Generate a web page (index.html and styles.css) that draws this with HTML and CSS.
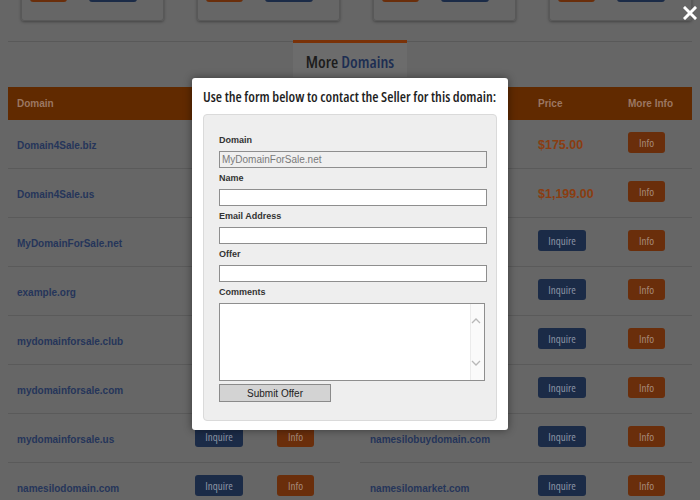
FILE: index.html
```html
<!DOCTYPE html>
<html lang="en">
<head>
<meta charset="utf-8">
<title>More Domains</title>
<link rel="stylesheet" href="styles.css">
</head>
<body>
<div class="page">
  <div class="cards">
    <div class="card"><span class="cbtn c-info"></span><span class="cbtn c-inq"></span></div>
    <div class="card"><span class="cbtn c-info"></span><span class="cbtn c-inq"></span></div>
    <div class="card"><span class="cbtn c-info"></span><span class="cbtn c-inq"></span></div>
    <div class="card"><span class="cbtn c-info"></span><span class="cbtn c-inq"></span></div>
  </div>

  <div class="tabs">
    <div class="tab"><span class="more">More</span> <span class="dom">Domains</span></div>
  </div>

  <div class="tables">
    <div class="tbl left">
      <div class="row head"><span>Domain</span><span></span><span></span></div>
      <div class="row"><a class="dname">Domain4Sale.biz</a><span></span><span></span></div>
      <div class="row"><a class="dname">Domain4Sale.us</a><span></span><span></span></div>
      <div class="row"><a class="dname">MyDomainForSale.net</a><span></span><span></span></div>
      <div class="row"><a class="dname">example.org</a><span></span><span></span></div>
      <div class="row"><a class="dname">mydomainforsale.club</a><span></span><span></span></div>
      <div class="row"><a class="dname">mydomainforsale.com</a><span></span><span></span></div>
      <div class="row"><a class="dname">mydomainforsale.us</a><span><button class="btn inq">Inquire</button></span><span><button class="btn info">Info</button></span></div>
      <div class="row"><a class="dname">namesilodomain.com</a><span><button class="btn inq">Inquire</button></span><span><button class="btn info">Info</button></span></div>
    </div>
    <div class="tbl right">
      <div class="row head"><span></span><span>Price</span><span>More Info</span></div>
      <div class="row"><span></span><span class="price">$175.00</span><span><button class="btn info">Info</button></span></div>
      <div class="row"><span></span><span class="price">$1,199.00</span><span><button class="btn info">Info</button></span></div>
      <div class="row"><span></span><span><button class="btn inq">Inquire</button></span><span><button class="btn info">Info</button></span></div>
      <div class="row"><span></span><span><button class="btn inq">Inquire</button></span><span><button class="btn info">Info</button></span></div>
      <div class="row"><span></span><span><button class="btn inq">Inquire</button></span><span><button class="btn info">Info</button></span></div>
      <div class="row"><span></span><span><button class="btn inq">Inquire</button></span><span><button class="btn info">Info</button></span></div>
      <div class="row"><a class="dname">namesilobuydomain.com</a><span><button class="btn inq">Inquire</button></span><span><button class="btn info">Info</button></span></div>
      <div class="row"><a class="dname">namesilomarket.com</a><span><button class="btn inq">Inquire</button></span><span><button class="btn info">Info</button></span></div>
    </div>
  </div>
</div>

<svg class="close" width="14" height="14" viewBox="0 0 14 14" aria-label="Close">
  <path d="M2 2 L12 12 M12 2 L2 12" stroke="#ffffff" stroke-width="3" stroke-linecap="square" fill="none"/>
</svg>

<div class="modal">
  <h2 class="mtitle">Use the form below to contact the Seller for this domain:</h2>
  <form class="panel">
    <label class="lbl">Domain</label>
    <input class="field ro" type="text" value="MyDomainForSale.net" readonly>
    <label class="lbl">Name</label>
    <input class="field" type="text">
    <label class="lbl">Email Address</label>
    <input class="field" type="text">
    <label class="lbl">Offer</label>
    <input class="field" type="text">
    <label class="lbl">Comments</label>
    <textarea class="area"></textarea>
    <button class="submit" type="button">Submit Offer</button>
  </form>
</div>
</body>
</html>
```
FILE: styles.css
```css
html, body {
  margin: 0;
  padding: 0;
  background: #666666;
  overflow: hidden;
  height: 500px;
}

.page {
  padding: 0 8px;
  font-family: "Liberation Sans", Arial, sans-serif;
}

/* top cards (page is scrolled, so only their bottoms show) */
.cards {
  display: flex;
  gap: 33px;
  padding-left: 13px;
  margin-top: -60px;
}
.card {
  box-sizing: border-box;
  width: 143px;
  height: 81px;
  border: 1px solid #585858;
  border-radius: 3px;
  box-shadow: 0 1px 3px rgba(0, 0, 0, 0.35);
  display: flex;
  align-items: flex-end;
  padding: 0 0 18px 8px;
  gap: 22px;
}
.cbtn {
  display: block;
  height: 21px;
  border-radius: 3px;
}
.c-info { width: 37px; background: #6a2e0b; }
.c-inq { width: 48px; background: #1b2b47; }

/* tab heading */
.tabs {
  margin-top: 20px;
  border-top: 1px solid #595959;
  display: flex;
  justify-content: center;
}
.tab {
  margin-top: -2px;
  width: 114px;
  height: 34px;
  border-top: 3px solid #7a3208;
  background: #6c6c6c;
  text-align: center;
  line-height: 37px;
  font-family: "Open Sans", "DejaVu Sans", sans-serif;
  font-stretch: 75%;
  font-weight: 600;
  font-size: 16.5px;
}
.more { color: #1c1c1c; }
.dom { color: #1d2e52; }

/* tables */
.tables {
  display: flex;
  gap: 20px;
  margin-top: 10px;
}
.tbl {
  flex: 1 1 0;
}
.row {
  display: grid;
  align-items: center;
  height: 48px;
  border-bottom: 1px solid #5a5a5a;
}
.left .row {
  grid-template-columns: 178px 82px 1fr;
  padding-left: 9px;
}
.right .row {
  grid-template-columns: 168px 90px 1fr;
  padding-left: 10px;
}
.row.head {
  height: 33px;
  border-bottom: 0;
  background: #612a00;
  color: #9b7762;
  font-weight: bold;
  font-size: 10px;
}
.dname {
  color: #25355a;
  font-weight: bold;
  font-size: 10px;
  padding-top: 2px;
}
.price {
  color: #8a3d11;
  font-weight: bold;
  font-size: 12.5px;
  padding-top: 2px;
}
.btn {
  display: block;
  border: 0;
  border-radius: 3px;
  height: 21px;
  padding: 0;
  margin-bottom: 4px;
  font-family: "Open Sans", "DejaVu Sans", sans-serif;
  font-stretch: 75%;
  font-weight: 500;
  font-size: 11px;
}
.inq {
  width: 48px;
  background: #1b2b47;
  color: #8c94a5;
}
.info {
  width: 37px;
  background: #6a2e0b;
  color: #a78a78;
}

/* close icon */
.close {
  position: absolute;
  left: 683px;
  top: 6px;
}

/* modal */
.modal {
  position: absolute;
  left: 192px;
  top: 78px;
  width: 316px;
  box-sizing: border-box;
  padding: 0 11px 9px;
  background: #ffffff;
  border-radius: 3px;
  box-shadow: 0 0 8px rgba(0, 0, 0, 0.45);
}
.mtitle {
  margin: 0;
  height: 36px;
  line-height: 38px;
  font-family: "Open Sans", "DejaVu Sans", sans-serif;
  font-stretch: 75%;
  font-weight: 600;
  font-size: 14.3px;
  color: #1e1e1e;
  white-space: nowrap;
}
.panel {
  margin: 0;
  border: 1px solid #dadada;
  border-radius: 4px;
  background: #eeeeee;
  padding: 15px 9px 18px 15px;
  font-family: "Liberation Sans", Arial, sans-serif;
}
.lbl {
  display: block;
  padding: 4px 0;
  line-height: 13px;
  font-size: 9px;
  font-weight: bold;
  color: #333333;
}
.field {
  display: block;
  box-sizing: border-box;
  width: 268px;
  height: 17px;
  margin: 0;
  padding: 0 2px;
  border: 1px solid #8e8e8e;
  background: #ffffff;
  font-family: "Liberation Sans", Arial, sans-serif;
  font-size: 10px;
  color: #333333;
}
.field.ro {
  background: #efefef;
  color: #7a7a7a;
}
.area {
  display: block;
  box-sizing: border-box;
  width: 266px;
  height: 78px;
  margin: 0;
  padding: 2px;
  border: 1px solid #8e8e8e;
  resize: none;
  overflow: hidden;
  font-family: "Liberation Sans", Arial, sans-serif;
  font-size: 10px;
  background-color: #ffffff;
  background-image:
    url("data:image/svg+xml;utf8,<svg xmlns='http://www.w3.org/2000/svg' width='10' height='7'><path d='M1 6 L5 2 L9 6' stroke='%23b8b8b8' stroke-width='1.3' fill='none'/></svg>"),
    url("data:image/svg+xml;utf8,<svg xmlns='http://www.w3.org/2000/svg' width='10' height='7'><path d='M1 1 L5 5 L9 1' stroke='%23b8b8b8' stroke-width='1.3' fill='none'/></svg>"),
    linear-gradient(to right, #ebebeb 0, #ebebeb 1px, #fafafa 1px, #fafafa 100%);
  background-repeat: no-repeat;
  background-position: right 3px top 13px, right 3px bottom 13px, right 0 top 0;
  background-size: 10px 7px, 10px 7px, 14px 100%;
}
.submit {
  display: block;
  box-sizing: border-box;
  width: 112px;
  height: 18px;
  margin-top: 3px;
  padding: 0;
  border: 1px solid #8a8a8a;
  background: #d3d3d3;
  font-family: "Liberation Sans", Arial, sans-serif;
  font-size: 10px;
  color: #222222;
}
```
